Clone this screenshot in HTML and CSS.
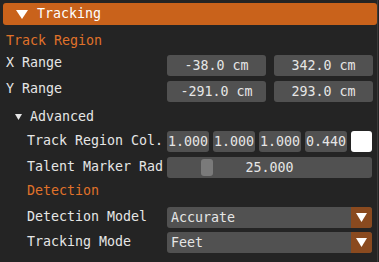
FILE: index.html
```html
<!DOCTYPE html>
<html>
<head>
<meta charset="utf-8">
<link rel="stylesheet" href="styles.css">
</head>
<body>
<div class="window">
  <div class="header">
    <svg class="hdr-arrow" width="12" height="9" viewBox="0 0 12 9"><polygon points="0,0 12,0 6,9" fill="#fff"/></svg>
    <span>Tracking</span>
  </div>

  <div class="title row-title">Track Region</div>

  <div class="row r-x">
    <div class="label up3">X Range</div>
    <div class="fields">
      <div class="frame half">-38.0 cm</div>
      <div class="frame half">342.0 cm</div>
    </div>
  </div>
  <div class="row r-y">
    <div class="label up3">Y Range</div>
    <div class="fields">
      <div class="frame half">-291.0 cm</div>
      <div class="frame half">293.0 cm</div>
    </div>
  </div>

  <div class="tree">
    <svg class="tree-arrow" width="7" height="6" viewBox="0 0 7 6"><polygon points="0,0 7,0 3.5,6" fill="#e6e6e6"/></svg>
    <span>Advanced</span>
  </div>

  <div class="row r-col indent">
    <div class="label up1">Track Region Col.</div>
    <div class="fields gap4">
      <div class="frame small">1.000</div>
      <div class="frame small">1.000</div>
      <div class="frame small">1.000</div>
      <div class="frame small">0.440</div>
      <div class="swatch"></div>
    </div>
  </div>
  <div class="row r-sl indent">
    <div class="label up1">Talent Marker Rad</div>
    <div class="fields">
      <div class="frame slider"><div class="grab"></div><span>25.000</span></div>
    </div>
  </div>

  <div class="title indent r-det">Detection</div>

  <div class="row r-c1 indent">
    <div class="label up1">Detection Model</div>
    <div class="fields">
      <div class="frame combo"><span>Accurate</span><div class="cbtn"><svg width="11" height="9" viewBox="0 0 11 9"><polygon points="0,0 11,0 5.5,9" fill="#fff"/></svg></div></div>
    </div>
  </div>
  <div class="row r-c2 indent">
    <div class="label up1">Tracking Mode</div>
    <div class="fields">
      <div class="frame combo"><span>Feet</span><div class="cbtn"><svg width="11" height="9" viewBox="0 0 11 9"><polygon points="0,0 11,0 5.5,9" fill="#fff"/></svg></div></div>
    </div>
  </div>
</div>
</body>
</html>
```

FILE: styles.css
```css
html, body {
  margin: 0;
  padding: 0;
  background: #242424;
}
body {
  width: 379px;
  height: 262px;
  overflow: hidden;
  font-family: "DejaVu Sans Mono", monospace;
  font-size: 13.3px;
  color: #e6e6e6;
}
.window {
  width: 378px;
  height: 262px;
  border-right: 1px solid #3a3a3a;
  padding-top: 3px;
  box-sizing: border-box;
}
.header {
  margin-left: 3px;
  width: 374px;
  height: 22px;
  background: #c9621b;
  border-radius: 3px;
  display: flex;
  align-items: center;
  color: #fff;
  line-height: 22px;
}
.hdr-arrow {
  margin-left: 13px;
  margin-right: 9px;
}
.title {
  color: #e0722a;
  height: 21px;
  line-height: 21px;
  padding-left: 6px;
}
.row-title {
  margin-top: 5px;
}
.row {
  display: flex;
  height: 21px;
  line-height: 21px;
  padding-left: 6px;
}
.indent {
  padding-left: 27px;
}
.label {
  width: 161px;
  flex: none;
  white-space: nowrap;
}
.label.up3 {
  line-height: 15px;
}
.label.up1 {
  line-height: 19px;
}
.indent .label {
  width: 140px;
}
.fields {
  display: flex;
  gap: 8px;
}
.fields.gap4 {
  gap: 4px;
}
.frame {
  background: #515151;
  border-radius: 3px;
  height: 21px;
  text-align: center;
  white-space: nowrap;
}
.half {
  width: 99px;
}
.small {
  width: 42px;
}
.swatch {
  width: 21px;
  height: 21px;
  background: #ffffff;
  border-radius: 3px;
}
.r-x { margin-top: 4px; }
.r-y { margin-top: 5px; }
.tree {
  margin-top: 4px;
  height: 21px;
  line-height: 21px;
  display: flex;
  align-items: center;
  padding-left: 15px;
}
.tree-arrow {
  margin-right: 8px;
}
.r-col { margin-top: 4px; }
.r-sl { margin-top: 5px; }
.slider {
  width: 205px;
  position: relative;
}
.grab {
  position: absolute;
  left: 34px;
  top: 2px;
  width: 12px;
  height: 17px;
  background: #7a7a7a;
  border-radius: 3px;
}
.slider span {
  position: relative;
}
.r-det {
  margin-top: 2px;
}
.r-c1 { margin-top: 6px; }
.r-c2 { margin-top: 4px; }
.combo {
  width: 205px;
  display: flex;
  justify-content: space-between;
  text-align: left;
  overflow: hidden;
}
.combo span {
  padding-left: 4px;
}
.cbtn {
  width: 21px;
  height: 21px;
  background: #8a4a1f;
  display: flex;
  align-items: center;
  justify-content: center;
}
```
